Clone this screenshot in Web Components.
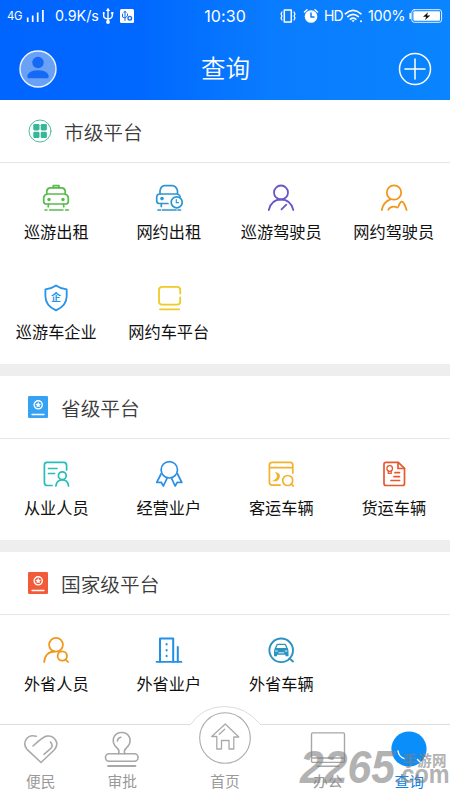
<!DOCTYPE html>
<html lang="zh-CN">
<head>
<meta charset="utf-8">
<title>查询</title>
<style>
html,body{margin:0;padding:0}
body{width:450px;height:800px;overflow:hidden;background:#fff;font-family:"Noto Sans CJK SC",sans-serif}
</style>
</head>
<body>
<query-app></query-app>
<script>
const define = (name, render) => customElements.define(name, class extends HTMLElement {
  connectedCallback() {
    if (this.shadowRoot) return;
    this.attachShadow({mode: 'open'}).innerHTML = render(this);
  }
});

const car = `<path d="M4.8 10V7.2Q5.2 4 8.4 3.9H19.6Q22.8 4 23.2 7.2V10"/><path d="M5 10H23Q26.3 11 26.3 14V17.5Q26.3 20 23.5 20H4.5Q1.7 20 1.7 17.500V14Q1.700 11 5 10Z"/><path d="M6.300 20V22.700M21.700 20V22.700"/><path d="M3 26H5M7.500 26H21M23.500 26H26.500" stroke-width="1.500"/>`;

/* Each entry: width, height, stroke colour, stroke width, shapes */
const ICONS = {
  taxi: [28,28,'#5abb4c',1.7, car + `<path d="M11.300 3.700V1.600H17V3.700"/><circle cx="7" cy="15.500" r="1.700" fill="#5abb4c" stroke="none"/><circle cx="21" cy="15.500" r="1.700" fill="#5abb4c" stroke="none"/>`],
  ride: [28,28,'#2c97cf',1.7, `<path d="M5 10V6.800Q6 1.800 9.500 1.700H17.500Q21 1.800 22.500 6.800V10"/><path d="M13 19.500H4.500Q1.700 19.500 1.700 17V13.500Q1.700 10 5 10H22.500Q25 10.800 25.300 13"/><path d="M6.300 19.500V22.500M3 26H5.500M7.500 26H21M23 26H25.500"/><circle cx="7" cy="14.600" r="1.800" fill="#2c97cf" stroke="none"/><circle cx="21.700" cy="18.300" r="5.500" fill="#fff"/><path d="M21.300 15.500V18.700H23.500" stroke-width="1.200"/>`],
  driver: [28,28,'#6a55c8',1.8, `<circle cx="14" cy="8.500" r="7"/><path d="M1.800 26Q4.300 15.500 14 15.500T26.300 26M14.500 25.300L19.300 20.600"/>`],
  driver2: [28,28,'#f0981c',1.8, `<circle cx="14" cy="8.500" r="7.200"/><path d="M1.800 26Q3.500 18 10 15.700M26.600 26L25 21.500Q23 17.200 21.500 17.700T18.400 22.500Q17.500 24.500 16 22.900Q10.500 21.500 8.300 25.700"/>`],
  shield: [28,28,'#2594ec',1.8, `<path d="M14 1.500Q19 5 24.700 5.400V12C24.700 19 20.500 23.500 14 26.400C7.500 23.500 3.400 19 3.400 12V5.400Q9 5 14 1.500Z"/><text x="14" y="17.200" font-size="10" font-weight="bold" text-anchor="middle" fill="#2594ec" stroke="none">企</text>`],
  platform: [28,28,'#efca29',1.8, `<path d="M25.200 9.500V6Q25.200 2.900 22 2.900H7.500Q4 2.900 4 6.200V17.500Q4 20.700 7.200 20.700H22Q25.200 20.700 25.200 17.500V13.500M5 25.300H24.200"/>`],
  staff: [28,28,'#25bfb8',1.7, `<path d="M10 25.500H5.500Q2.400 25.500 2.400 22.400V5Q2.400 2.400 5 2.400H21.500Q24.600 2.400 24.600 5.400V10M6.500 8.500H15M6.500 13.500H12.500"/><circle cx="20.300" cy="15.700" r="3.900"/><path d="M13.900 26Q14.700 19.800 20.300 19.800T26.500 26"/>`],
  medal: [28,28,'#2a8fe8',1.7, `<circle cx="14.300" cy="9.800" r="8.200"/><path d="M6 14L1.700 22.500L6.200 22.300L8.400 26L12 18.400M22.600 14L26.800 22.500L22.300 22.300L20.100 26L16.600 18.400"/>`],
  bus: [28,28,'#f1b32b',1.7, `<path d="M13 25.200H5.200Q2.400 25.200 2.400 22.300V5.200Q2.400 2.400 5.200 2.400H23Q25.800 2.400 25.800 5.200V13M2.400 7.600H25.800"/><circle cx="20.700" cy="20.500" r="5"/><path d="M24.500 24.200L26.300 26"/><path d="M8 12Q12.500 12.500 12.900 15.500Q13 19 9.800 21.200H4.800Q9 19.500 9.800 17Q10.200 14.500 8 12Z" fill="#f1b32b" stroke="none"/>`],
  freight: [28,28,'#e8582f',1.7, `<path d="M18.300 2.400H6Q4 2.400 4 4.400V23.500Q4 25.500 6 25.500H22.500Q24.500 25.500 24.500 23.500V8.300Z"/><path d="M18 2.600V8.500H24.300M15 12.700H19.500M14 16.600H19.500M11 20.500H19.500"/><circle cx="9.700" cy="8.500" r="2.800" stroke-width="1.300"/><path d="M8.300 11V13.400H11.200V11" stroke-width="1.300"/>`],
  outman: [28,28,'#ef981d',1.8, `<circle cx="14" cy="8.700" r="6.900"/><path d="M2.200 26C2.600 19.500 6.500 15.600 12.500 15.500"/><circle cx="20.300" cy="20" r="4.700"/><path d="M23.600 23.300L26 26"/>`],
  building: [28,28,'#2090e8',1.7, `<path d="M5 25.800V2.500H18.200V25.800M22.800 11V25.800" stroke-width="2"/><path d="M1.500 25.900H26.500"/><path d="M11.600 8V8.500M11.600 14V14.500M11.600 19.700V20.200" stroke-width="2"/>`],
  carsearch: [28,28,'#2b93c0',1.9, `<circle cx="14.200" cy="14.300" r="11.800"/><path d="M22.500 22.500L26 25.500"/><path d="M8.500 12.500L9.700 9.200Q10 8.300 11 8.300H17.500Q18.500 8.300 18.800 9.200L20 12.500" stroke-width="1.300"/><path d="M8 12H20.500Q21.500 13 21.500 15.500V20.300H18.500V18.800H10V20.300H7V15.500Q7 13 8 12Z" fill="#2b93c0" stroke="none"/><path d="M8.500 15H10.300M18.200 15H20M11.800 16.800H16.800" stroke="#fff" stroke-width=".9"/>`],
  grid: [24,24,'#37b79a',.9, `<circle cx="12" cy="12" r="11"/><g fill="#37b79a" stroke="none"><rect x="5.300" y="5" width="6.200" height="6.400" rx="1.300"/><rect x="12.700" y="5" width="6.200" height="6.400" rx="1.300"/><rect x="5.300" y="12.700" width="6.200" height="6.400" rx="1.300"/><rect x="12.700" y="12.700" width="6.200" height="6.400" rx="1.300"/></g>`],
  book: [20,22,'#fff',1.4, `<rect width="20" height="22" rx="1.300" fill="currentColor" stroke="none"/><circle cx="10.200" cy="8.800" r="4.100"/><path d="M10.200 5.900L11.100 7.700L13 8L11.600 9.400L11.900 11.300L10.200 10.400L8.500 11.300L8.800 9.400L7.400 8L9.300 7.700Z" fill="#fff" stroke="none"/><path d="M4 18.500H16"/>`],
  heart: [36,36,'#aaa',1.6, `<path d="M13.300 5.300C4 2.500-1.300 12 4 18.300L18 31.500L31.700 18.500C37 11.500 31 4 23.500 5.100C20.500 5.300 17 8.500 10 15"/><path d="M27.500 11Q31 15.500 27 18.200L21 23.300"/>`],
  stamp: [36,36,'#a8a8a8',1.6, `<path d="M14.700 22.800Q15.700 19.300 13.200 17.200C5.500 10.500 10 1.500 17.700 1.500S29.700 10.500 22.200 17.200Q19.600 19.300 20.700 22.800"/><path d="M13.400 10Q13.800 6.800 16.800 6.200"/><rect x="1.500" y="22.800" width="32.500" height="7.500" rx="3.500"/><path d="M4 35H31.500" stroke-width="1.800"/>`],
  desk: [36,36,'#a6a6a6',1.4, `<rect x="1.500" y="1.900" width="33" height="29.500" rx="1.300"/><path d="M2 27H34M7 35.200H29"/>`],
  search: [36,36,'#fff',1.4, `<circle cx="18" cy="18" r="17.600" fill="#0a8ffa" stroke="none"/><path d="M7 20Q8 26 13.300 27.600M26.500 28.500L32 34"/>`],
  avatar: [38,38,'#eaf5ff',1.4, `<circle cx="19" cy="19" r="18" fill="#69a1f6"/><circle cx="19" cy="12.500" r="5.700" fill="#1569f5" stroke="none"/><path d="M8.500 27.500V25Q10.500 20.300 19 20.300T29.500 25V27.500Q29.500 28.300 28.500 28.300H9.500Q8.500 28.300 8.500 27.500Z" fill="#1569f5" stroke="none"/>`],
  plus: [34,34,'#fff',1.5, `<circle cx="17" cy="17" r="15.500"/><path d="M7 17H27M17 7V27"/>`],
  home: [52,52,'#aaa',1.1, `<circle cx="26" cy="26" r="25.300"/><path d="M26.300 12L12.700 24.500H17.800V37H22.500V28.500H30V37H34.800V25H39.800Z" stroke-width="1.300"/><path d="M20.300 22.300L25.700 17.200" stroke-width="1.300"/>`],
  signal: [20,14,'#fff',1.7, `<path stroke-linecap="butt" d="M1.700 13V8.500M6.700 13V6.500M11.700 13V3.500M16.900 13V1"/>`],
  usb: [12,18,'#fff',1.4, `<path d="M6 3V14M1.700 6V9Q1.700 11.500 6 12Q10.300 11.500 10.300 8.500V6"/><path d="M3.800 4L6 .8L8.200 4Z" fill="#fff" stroke="none"/><circle cx="6" cy="15" r="1.900" fill="#fff" stroke="none"/><circle cx="1.700" cy="6" r="1" fill="#fff" stroke="none"/><path d="M9.200 5H11.400V7.200H9.200Z" fill="#fff" stroke="none"/>`],
  debug: [14,14,'#1b70ed',1, `<rect width="14" height="14" rx="1.500" fill="#fff" stroke="none"/><path d="M5 3V11.500M2.500 5V8L5 9L7.500 7V5M4 3.500L5 2L6 3.500"/><circle cx="9.800" cy="9.200" r="1.800" stroke-width="1.400"/>`],
  vibrate: [18,14,'#fff',1.2, `<rect x="5.300" y="1" width="7" height="12" stroke-width="1.500"/><path d="M3 3L2 5L3 7L2 9L3 11M15 3L16 5L15 7L16 9L15 11"/>`],
  alarm: [16,16,'#fff',1.5, `<circle cx="8" cy="8.500" r="6.300" fill="#fff" stroke="none"/><path d="M1.500 4L4 1.800M12 1.800L14.500 4"/><path d="M8 5V9H11" stroke="#0a7bff"/>`],
  wifi: [20,14,'#fff',1.6, `<path d="M1.300 4.800Q9 -2 17 4.800M3.800 7.600Q9 3 14.400 7.600M6.400 10.200Q9 8 11.800 10.200"/><path d="M7.500 11.300H10.800L9.100 13.200Z" fill="#fff" stroke="none"/><circle cx="17" cy="12.200" r="1" fill="#fff" stroke="none"/>`],
  battery: [34,14,'#fff',1, `<rect x="2.800" y=".7" width="29.800" height="12.600" rx="2.400" stroke-width=".9"/><rect x="4.400" y="2.200" width="26.600" height="9.600" rx="1" fill="#fff" stroke="none"/><path d="M1.200 4.500V9.500" stroke-width="1.500"/><path d="M19 3.300L14 7.700H17.200L16 11L21.300 6.500H18Z" fill="#111" stroke="none"/>`]
};

define('app-icon', el => {
  const [w, h, color, sw, body] = ICONS[el.getAttribute('name')];
  return `<style>:host{display:block;flex:none;width:${w}px;height:${h}px}svg{display:block}</style>
  <svg width="${w}" height="${h}" viewBox="0 0 ${w} ${h}" fill="none" stroke="${color}" stroke-width="${sw}" stroke-linecap="round" stroke-linejoin="round">${body}</svg>`;
});

define('status-bar', () => `<style>
:host{display:grid;grid-template-columns:1fr auto 1fr;height:31px;align-items:center;color:#fff;font:14.500px/20px Inter,sans-serif;white-space:nowrap}
div{display:flex;align-items:center}
.l{padding-left:7px}.r{justify-content:flex-end;padding-right:7px}
.g{font-size:11.300px;letter-spacing:-.3px;width:19px}.s{width:44px;margin:0 3px 0 9px;letter-spacing:0;font-size:14.300px}
.time{font-size:16px;letter-spacing:.1px}.hd{font-size:14px;width:18px;letter-spacing:-.9px;margin:0 2px 0 5px}.p{width:37px;font-size:14.500px;margin:0 4px 0 4px;letter-spacing:-.3px}
</style>
<div class="l"><span class="g">4G</span><app-icon name="signal"></app-icon><span class="s">0.9K/s</span><app-icon name="usb"></app-icon><app-icon name="debug" style="margin-left:6px"></app-icon></div>
<span class="time">10:30</span>
<div class="r"><app-icon name="vibrate"></app-icon><app-icon name="alarm" style="margin-left:6px"></app-icon><span class="hd">HD</span><app-icon name="wifi"></app-icon><span class="p">100%</span><app-icon name="battery"></app-icon></div>`);

define('nav-bar', () => `<style>
:host{display:grid;grid-template-columns:1fr auto 1fr;align-items:center;height:69px;padding:6px 18px 0 19px;box-sizing:border-box;color:#fff}
h1{margin:0;font-weight:350;font-size:24.500px;line-height:36px;padding-bottom:2px}
.end{justify-self:end}
</style><app-icon name="avatar"></app-icon><h1><slot></slot></h1><app-icon class="end" name="plus"></app-icon>`);

define('platform-section', el => `<style>
:host{display:block;background:#fff;padding-bottom:1px}
header{display:flex;align-items:center;height:63px;box-sizing:border-box;border-bottom:1px solid #e7e7e7;padding-left:28px;color:${el.getAttribute('tint') || 'inherit'}}
h2{margin:0 0 0 ${el.getAttribute('gap')}px;font-weight:350;font-size:19.700px;line-height:30px;color:#3b3b3b;padding-top:1px}
.grid{display:grid;grid-template-columns:repeat(4,112.500px)}
</style><header><app-icon name="${el.getAttribute('icon')}"></app-icon><h2>${el.getAttribute('heading')}</h2></header><div class="grid"><slot></slot></div>`);

define('query-item', el => `<style>
:host{display:flex;flex-direction:column;align-items:center;height:100px;box-sizing:border-box;padding-top:21px}
span{margin-top:8px;font-size:16.200px;line-height:22px;color:#111;white-space:nowrap}
</style><app-icon name="${el.getAttribute('icon')}"></app-icon><span><slot></slot></span>`);

define('tab-item', el => `<style>
:host{display:flex;flex-direction:column;align-items:center;justify-content:flex-end;color:#999;font-size:14.700px;line-height:20px;position:relative;padding-bottom:9px;gap:4px}
:host([active]){color:#0b83e9}
:host([main]){gap:7px}
</style><app-icon name="${el.getAttribute('icon')}"></app-icon><span><slot></slot></span>`);

define('tab-bar', () => `<style>
:host{display:grid;grid-template-columns:81.500px 81.500px 124px 81.500px 81.500px;grid-template-rows:76px;height:76px;flex:none;position:relative}
.edge{position:absolute;left:0;bottom:0}
</style><svg class="edge" width="450" height="96"><path d="M-1 20.500H190.500Q203 2.500 224.500 2.500T260.500 20.500H451V97H-1Z" fill="#fff" stroke="#ddd"/></svg><slot></slot>`);

define('site-mark', () => `<style>
:host{position:absolute;left:298px;top:744px;width:152px;height:46px;opacity:.6;pointer-events:none}
svg{display:block}
</style><svg width="152" height="46" fill="#808080"><text x="2" y="39" font-family="Liberation Sans,sans-serif" font-weight="bold" font-style="italic" font-size="46" textLength="95" lengthAdjust="spacingAndGlyphs">2265</text><text x="104.500" y="22" font-size="14.500" font-weight="bold" textLength="44">手游网</text><text x="97" y="39" font-family="Liberation Sans,sans-serif" font-weight="bold" font-size="26" textLength="54.500" lengthAdjust="spacingAndGlyphs">.com</text></svg>`);

define('query-app', () => `<style>
:host{display:flex;flex-direction:column;width:450px;height:800px;position:relative;background:#fff}
.top{height:100px;background:linear-gradient(90deg,#0065ff 0%,#0067ff 30%,#0a7cff 60%,#0a84ff 100%);flex:none}
main{flex:1;display:flex;flex-direction:column;gap:12px;background:linear-gradient(#eee,#eee) 0 0/100% 460px no-repeat}
</style>
<div class="top"><status-bar></status-bar><nav-bar>查询</nav-bar></div>
<main>
<platform-section icon="grid" heading="市级平台" gap="12">
<query-item icon="taxi">巡游出租</query-item><query-item icon="ride">网约出租</query-item><query-item icon="driver">巡游驾驶员</query-item><query-item icon="driver2">网约驾驶员</query-item><query-item icon="shield">巡游车企业</query-item><query-item icon="platform">网约车平台</query-item>
</platform-section>
<platform-section icon="book" heading="省级平台" gap="13" tint="#35a2f4">
<query-item icon="staff">从业人员</query-item><query-item icon="medal">经营业户</query-item><query-item icon="bus">客运车辆</query-item><query-item icon="freight">货运车辆</query-item>
</platform-section>
<platform-section icon="book" heading="国家级平台" gap="13" tint="#f15b39">
<query-item icon="outman">外省人员</query-item><query-item icon="building">外省业户</query-item><query-item icon="carsearch">外省车辆</query-item>
</platform-section>
</main>
<tab-bar><tab-item icon="heart">便民</tab-item><tab-item icon="stamp">审批</tab-item><tab-item icon="home" main>首页</tab-item><tab-item icon="desk">办公</tab-item><tab-item icon="search" active>查询</tab-item></tab-bar>
<site-mark></site-mark>`);
</script>
</body>
</html>
